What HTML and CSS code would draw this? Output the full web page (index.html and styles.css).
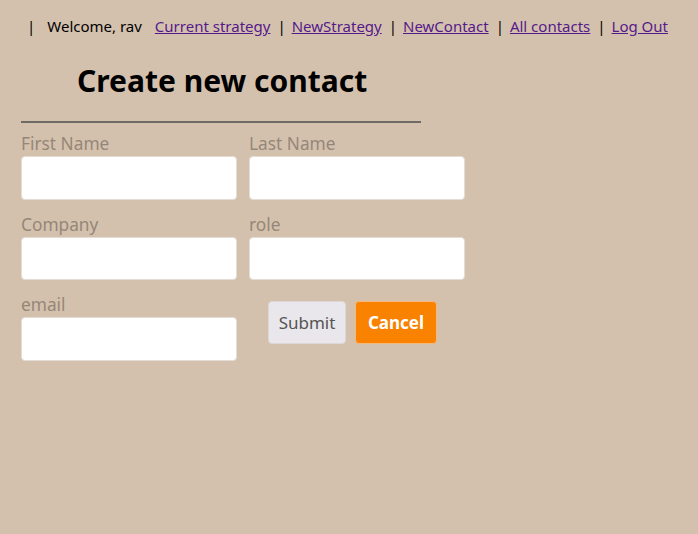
FILE: index.html
```html
<!DOCTYPE html>
<html>
<head>
<meta charset="utf-8">
<link rel="stylesheet" href="styles.css">
</head>
<body>
<nav class="topnav">
  <span class="sep">|</span>
  <span class="welcome">Welcome, rav</span>
  <a href="#">Current strategy</a>
  <span class="sep">|</span>
  <a href="#">NewStrategy</a>
  <span class="sep">|</span>
  <a href="#">NewContact</a>
  <span class="sep">|</span>
  <a href="#">All contacts</a>
  <span class="sep">|</span>
  <a href="#">Log Out</a>
</nav>
<main class="page">
  <h1 class="title">Create new contact</h1>
  <hr class="rule">
  <form class="form">
    <div class="field">
      <label class="label">First Name</label>
      <input class="input" type="text">
    </div>
    <div class="field">
      <label class="label">Last Name</label>
      <input class="input" type="text">
    </div>
    <div class="field">
      <label class="label">Company</label>
      <input class="input" type="text">
    </div>
    <div class="field">
      <label class="label">role</label>
      <input class="input" type="text">
    </div>
    <div class="field">
      <label class="label">email</label>
      <input class="input" type="text">
    </div>
    <div class="actions">
      <button type="button" class="btn btn-submit">Submit</button>
      <button type="button" class="btn btn-cancel">Cancel</button>
    </div>
  </form>
</main>
</body>
</html>
```
FILE: styles.css
```css
html, body {
  margin: 0;
  padding: 0;
  background: #d4c1ad;
  font-family: "Noto Sans", "Open Sans", sans-serif;
}
body {
  width: 698px;
  height: 534px;
  overflow: hidden;
}
.topnav {
  display: flex;
  align-items: center;
  height: 20px;
  padding: 16px 0 0 27px;
  font-size: 15px;
  color: #000;
  white-space: nowrap;
}
.topnav .sep {
  margin: 0 6px 0 0;
}
.topnav a {
  color: #551a8b;
  margin-right: 7px;
}
.topnav .welcome {
  margin: 0 13px 0 6px;
}
.page {
  padding: 0 0 0 21px;
}
.title {
  margin: 0;
  padding: 25px 0 0 56px;
  height: 40px;
  line-height: 40px;
  font-size: 30px;
  font-weight: 700;
  color: #000;
}
.rule {
  width: 400px;
  margin: 20px 0 0 0;
  border: 0;
  border-top: 2px solid #6f6a66;
  height: 0;
}
.form {
  display: grid;
  grid-template-columns: 216px 216px;
  column-gap: 12px;
  row-gap: 13px;
  margin-top: 9px;
  width: 444px;
}
.field {
  display: flex;
  flex-direction: column;
}
.label {
  font-size: 17.3px;
  line-height: 24px;
  color: #958778;
}
.input {
  box-sizing: border-box;
  width: 216px;
  height: 43.5px;
  margin: 0;
  border: 1px solid #e4ddd6;
  border-radius: 4px;
  background: #fff;
}
.actions {
  display: flex;
  align-items: flex-start;
  gap: 9px;
  padding: 8px 0 0 19px;
}
.btn {
  box-sizing: border-box;
  height: 43px;
  border-radius: 4px;
  font-family: "Noto Sans", "Open Sans", sans-serif;
  font-size: 17px;
  padding: 0 8px;
  cursor: pointer;
}
.btn-submit {
  width: 78px;
  background: #e9e7eb;
  border: 1px solid #ddd8d8;
  color: #555;
}
.btn-cancel {
  width: 82px;
  background: #f98200;
  border: 1px solid #f5b77a;
  color: #fff;
  font-weight: 700;
}
```
